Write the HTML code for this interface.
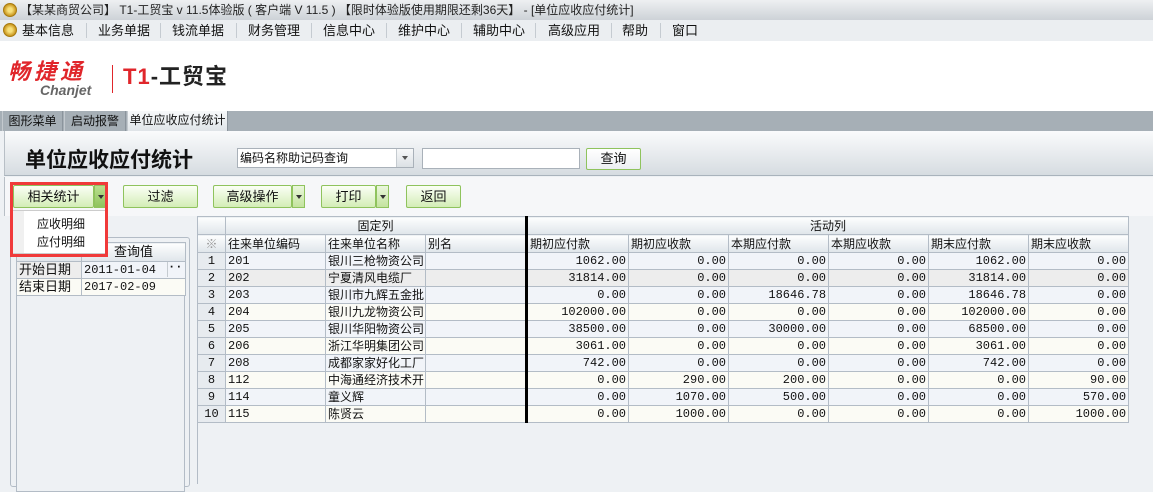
<!DOCTYPE html>
<html><head><meta charset="utf-8"><style>
*{margin:0;padding:0;box-sizing:border-box}
body{width:1153px;height:484px;overflow:hidden;background:#eef1f4;font-family:"Liberation Sans","Noto Sans CJK SC","WenQuanYi Zen Hei",sans-serif;font-size:12px;color:#111;position:relative}
.abs{position:absolute}
.title{left:0;top:0;width:1153px;height:20px;background:linear-gradient(#eef0f2,#cdd2d7);font-size:12px;line-height:20px;padding-left:20px;color:#222}
.coin{width:14px;height:14px;border-radius:50%;background:radial-gradient(circle,#f7e07a 25%,#c9961e 70%);border:1px solid #a67a10}
.menu{left:0;top:20px;width:1153px;height:21px;background:#ebeef1;line-height:21px;font-size:13px}
.menu span{position:absolute;top:0}
.menu i{position:absolute;top:3px;width:1px;height:15px;background:#c5cbd1}
.logo{left:0;top:41px;width:1153px;height:70px;background:#fff}
.tabbar{left:0;top:111px;width:1153px;height:20px;background:#a6afb6}
.tab{top:111px;height:20px;line-height:20px;text-align:center;font-size:12px;border-right:1px solid #8b949c;border-left:1px solid #c3c9ce}
.head{left:4px;top:131px;width:1149px;height:45px;background:linear-gradient(#fafbfc,#d6dce1);border-left:1px solid #b8bfc6;border-bottom:1px solid #a9b3bc}
.tool{left:4px;top:177px;width:1149px;height:39px;background:#f6f7f9;border-left:1px solid #b8bfc6}
.btn{height:23px;top:185px;border:1px solid #8fc35d;border-radius:2px;background:linear-gradient(#fbfff5,#d3edb6);text-align:center;line-height:21px;font-size:13px}
.arr{top:185px;height:23px;width:13px;border:1px solid #8fc35d;background:linear-gradient(#eaf7dc,#c3e39e)}
.arr:after{content:"";position:absolute;left:3px;top:9px;border-left:3px solid transparent;border-right:3px solid transparent;border-top:4px solid #333}
table{border-collapse:collapse;table-layout:fixed}
.grid tr{height:17px}
.grid td{border:1px solid #b3bcc6;height:17px;line-height:14px;font-size:12px;padding:0 2px;white-space:nowrap;overflow:hidden;font-family:"Liberation Mono","Noto Sans CJK SC",monospace}
.grid td.n{text-align:right}
.grid td.cn{font-family:"Liberation Sans","Noto Sans CJK SC",sans-serif;font-size:12px}
.grid tr.h td{background:linear-gradient(#fdfefe,#dfe5ea);font-family:"Liberation Sans","Noto Sans CJK SC",sans-serif;font-size:12px}
.grid td.r{background:#e7ebef;text-align:center}
tr.a td{background:#f1f4f9}tr.b td{background:#fbfbf5}tr.s td{background:#ededed}
.grid td.tk{border-left:3px solid #000}
</style></head><body>
<div class="abs title">【某某商贸公司】 T1-工贸宝 v 11.5体验版 ( 客户端 V 11.5 ) 【限时体验版使用期限还剩36天】 - [单位应收应付统计]</div>
<div class="abs coin" style="left:3px;top:3px"></div>
<div class="abs menu">
<div class="abs coin" style="left:3px;top:3px"></div>
<span style="left:22px">基本信息</span><i style="left:86px"></i>
<span style="left:98px">业务单据</span><i style="left:160px"></i>
<span style="left:172px">钱流单据</span><i style="left:236px"></i>
<span style="left:248px">财务管理</span><i style="left:311px"></i>
<span style="left:323px">信息中心</span><i style="left:386px"></i>
<span style="left:398px">维护中心</span><i style="left:461px"></i>
<span style="left:473px">辅助中心</span><i style="left:535px"></i>
<span style="left:548px">高级应用</span><i style="left:611px"></i>
<span style="left:622px">帮助</span><i style="left:660px"></i>
<span style="left:672px">窗口</span>
</div>
<div class="abs logo">
<div class="abs" style="left:8px;top:19px;color:#e0262b;font-size:22px;line-height:24px;font-weight:bold;font-style:italic;letter-spacing:4px">畅捷通</div>
<div class="abs" style="left:40px;top:41px;color:#666;font-size:14px;line-height:16px;font-style:italic;font-weight:bold">Chanjet</div>
<div class="abs" style="left:112px;top:24px;width:1px;height:28px;background:#e0262b"></div>
<div class="abs" style="left:123px;top:24px;font-size:22px;line-height:24px;font-weight:bold;color:#222;letter-spacing:1px"><span style="color:#e0262b">T1</span>-工贸宝</div>
</div>
<div class="abs tabbar"></div>
<div class="abs tab" style="left:2px;width:61px">图形菜单</div>
<div class="abs tab" style="left:64px;width:62px">启动报警</div>
<div class="abs tab" style="left:127px;width:101px;background:linear-gradient(#f7f9fa,#dfe4e8);line-height:18px">单位应收应付统计</div>
<div class="abs head"></div>
<div class="abs" style="left:25px;top:144px;font-size:21px;font-weight:bold;color:#111">单位应收应付统计</div>
<div class="abs" style="left:237px;top:148px;width:177px;height:20px;background:#fff;border:1px solid #a9b1b9;line-height:18px;padding-left:2px;font-size:12px">编码名称助记码查询</div>
<div class="abs" style="left:396px;top:149px;width:17px;height:18px;background:linear-gradient(#f7f8f9,#dce1e5);border-left:1px solid #c5cbd0"><div style="position:absolute;left:5px;top:7px;border-left:3px solid transparent;border-right:3px solid transparent;border-top:4px solid #555"></div></div>
<div class="abs" style="left:422px;top:148px;width:158px;height:21px;background:#fff;border:1px solid #a9b1b9"></div>
<div class="abs" style="left:586px;top:148px;width:55px;height:22px;border:1px solid #8fc35d;border-radius:2px;background:linear-gradient(#fff,#eceff2);text-align:center;line-height:20px;font-size:13px">查询</div>
<div class="abs tool"></div>
<div class="abs btn" style="left:13px;width:81px">相关统计</div>
<div class="abs arr" style="left:94px;background:linear-gradient(#b9df8e,#8fc35d)"></div>
<div class="abs btn" style="left:123px;width:75px">过滤</div>
<div class="abs btn" style="left:213px;width:79px">高级操作</div><div class="abs arr" style="left:292px"></div>
<div class="abs btn" style="left:321px;width:55px">打印</div><div class="abs arr" style="left:376px"></div>
<div class="abs btn" style="left:406px;width:55px">返回</div>
<!-- left panel -->
<div class="abs" style="left:10px;top:237px;width:180px;height:250px;border:1px solid #b3bcc6;border-radius:3px;background:#eef1f4"></div>
<div class="abs" style="left:16px;top:242px;width:169px;height:250px;border:1px solid #b3bcc6;background:#eef1f4"></div>
<table class="abs grid" style="left:16px;top:242px;width:169px">
<colgroup><col style="width:65px"><col style="width:104px"></colgroup>
<tr class="h" style="height:19px"><td></td><td style="text-align:center;font-size:13px">查询值</td></tr>
<tr><td class="cn" style="background:#ededed;font-size:13px">开始日期</td><td style="background:#f1f4f9;position:relative">2011-01-04<span style="position:absolute;right:0;top:0;width:18px;height:15px;border-left:1px solid #c5cbd0;text-align:center;line-height:10px;font-weight:bold">···</span></td></tr>
<tr><td class="cn" style="background:#fbfbf5;font-size:13px">结束日期</td><td style="background:#fbfbf5">2017-02-09</td></tr>
</table>
<!-- dropdown -->
<div class="abs" style="left:12px;top:210px;width:94px;height:44px;background:#f0f0f0;border:1px solid #ccc"></div>
<div class="abs" style="left:24px;top:211px;width:81px;height:42px;background:#fff"></div>
<div class="abs" style="left:37px;top:215px;font-size:12px;line-height:18px">应收明细<br>应付明细</div>
<div class="abs" style="left:10px;top:182px;width:98px;height:75px;border:3px solid #f03a3a"></div>
<!-- grid -->
<div class="abs" style="left:197px;top:216px;width:931px;height:268px;background:#eef1f4;border-left:1px solid #b3bcc6"></div>
<table class="abs grid" style="left:197px;top:216px;width:931px">
<colgroup><col style="width:28px"><col style="width:100px"><col style="width:100px"><col style="width:101px"><col style="width:102px"><col style="width:100px"><col style="width:100px"><col style="width:100px"><col style="width:100px"><col style="width:100px"></colgroup>
<tr class="h" style="height:18px"><td></td><td colspan="3" style="text-align:center">固定列</td><td class="tk" colspan="6" style="text-align:center">活动列</td></tr>
<tr class="h" style="height:18px"><td class="r" style="color:#999">※</td><td>往来单位编码</td><td>往来单位名称</td><td>别名</td><td class="tk">期初应付款</td><td>期初应收款</td><td>本期应付款</td><td>本期应收款</td><td>期末应付款</td><td>期末应收款</td></tr>
<tr class="a"><td class="r">1</td><td>201</td><td class="cn">银川三枪物资公司</td><td></td><td class="n tk">1062.00</td><td class="n">0.00</td><td class="n">0.00</td><td class="n">0.00</td><td class="n">1062.00</td><td class="n">0.00</td></tr>
<tr class="s"><td class="r">2</td><td>202</td><td class="cn">宁夏清风电缆厂</td><td></td><td class="n tk">31814.00</td><td class="n">0.00</td><td class="n">0.00</td><td class="n">0.00</td><td class="n">31814.00</td><td class="n">0.00</td></tr>
<tr class="a"><td class="r">3</td><td>203</td><td class="cn">银川市九辉五金批</td><td></td><td class="n tk">0.00</td><td class="n">0.00</td><td class="n">18646.78</td><td class="n">0.00</td><td class="n">18646.78</td><td class="n">0.00</td></tr>
<tr class="b"><td class="r">4</td><td>204</td><td class="cn">银川九龙物资公司</td><td></td><td class="n tk">102000.00</td><td class="n">0.00</td><td class="n">0.00</td><td class="n">0.00</td><td class="n">102000.00</td><td class="n">0.00</td></tr>
<tr class="a"><td class="r">5</td><td>205</td><td class="cn">银川华阳物资公司</td><td></td><td class="n tk">38500.00</td><td class="n">0.00</td><td class="n">30000.00</td><td class="n">0.00</td><td class="n">68500.00</td><td class="n">0.00</td></tr>
<tr class="b"><td class="r">6</td><td>206</td><td class="cn">浙江华明集团公司</td><td></td><td class="n tk">3061.00</td><td class="n">0.00</td><td class="n">0.00</td><td class="n">0.00</td><td class="n">3061.00</td><td class="n">0.00</td></tr>
<tr class="a"><td class="r">7</td><td>208</td><td class="cn">成都家家好化工厂</td><td></td><td class="n tk">742.00</td><td class="n">0.00</td><td class="n">0.00</td><td class="n">0.00</td><td class="n">742.00</td><td class="n">0.00</td></tr>
<tr class="b"><td class="r">8</td><td>112</td><td class="cn">中海通经济技术开</td><td></td><td class="n tk">0.00</td><td class="n">290.00</td><td class="n">200.00</td><td class="n">0.00</td><td class="n">0.00</td><td class="n">90.00</td></tr>
<tr class="a"><td class="r">9</td><td>114</td><td class="cn">童义辉</td><td></td><td class="n tk">0.00</td><td class="n">1070.00</td><td class="n">500.00</td><td class="n">0.00</td><td class="n">0.00</td><td class="n">570.00</td></tr>
<tr class="b"><td class="r">10</td><td>115</td><td class="cn">陈贤云</td><td></td><td class="n tk">0.00</td><td class="n">1000.00</td><td class="n">0.00</td><td class="n">0.00</td><td class="n">0.00</td><td class="n">1000.00</td></tr>
</table>
</body></html>
